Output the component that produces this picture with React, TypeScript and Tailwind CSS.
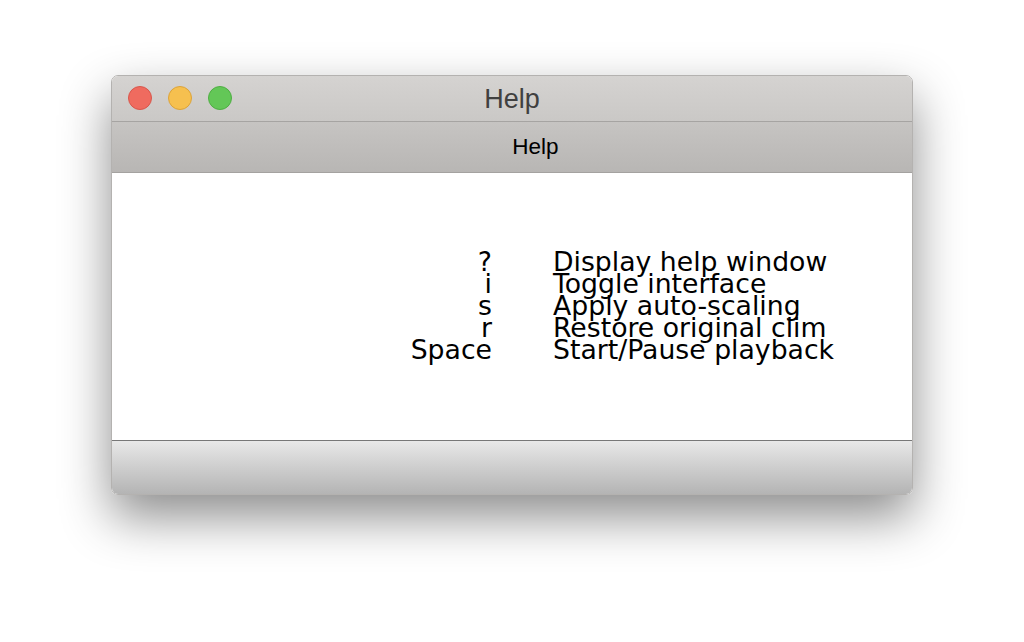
const shortcuts: [string, string][] = [
  ['?', 'Display help window'],
  ['i', 'Toggle interface'],
  ['s', 'Apply auto-scaling'],
  ['r', 'Restore original clim'],
  ['Space', 'Start/Pause playback'],
];

export default function App() {
  return (
    <div className="min-h-[642px] w-full bg-white pt-[75px]">
      {/* Window */}
      <div className="mx-auto flex h-[420px] w-[802px] flex-col overflow-hidden rounded-[7px] border border-[#b4b2b0] shadow-[0_22px_50px_rgba(0,0,0,0.45)]">
        {/* Title bar */}
        <div className="relative flex h-[46px] shrink-0 items-center justify-center border-b border-[#a6a4a2] bg-gradient-to-b from-[#d5d3d1] to-[#cac8c6]">
          <div className="absolute left-[16px] top-[10px] flex gap-[16px]">
            <span className="h-[24px] w-[24px] rounded-full border border-[#d8574c] bg-[#ef6b5f]" />
            <span className="h-[24px] w-[24px] rounded-full border border-[#dca33a] bg-[#f6c04f]" />
            <span className="h-[24px] w-[24px] rounded-full border border-[#4fae43] bg-[#63c757]" />
          </div>
          <span className="pt-[2px] font-['Liberation_Sans',Arial,sans-serif] text-[27px] leading-none text-[#404040]">Help</span>
        </div>
        {/* Toolbar */}
        <div className="flex h-[51px] shrink-0 items-center justify-center border-b border-[#a4a2a0] bg-gradient-to-b from-[#c6c4c2] to-[#b8b6b4] pl-[47px]">
          <span className="font-['Liberation_Sans',Arial,sans-serif] text-[22.5px] leading-none text-black">Help</span>
        </div>
        {/* Content */}
        <div className="flex-1 bg-white pt-[78px] font-['DejaVu_Sans',sans-serif] text-[26.7px] leading-[22px] text-black">
          <div className="grid grid-cols-[380px_auto] gap-x-[61px]">
            {shortcuts.map(([key, desc]) => (
              <div key={key} className="contents">
                <span className="text-right">{key}</span>
                <span>{desc}</span>
              </div>
            ))}
          </div>
        </div>
        {/* Bottom bar */}
        <div className="h-[54px] shrink-0 border-t border-[#777777] bg-gradient-to-b from-[#e8e8e8] to-[#b4b4b4]" />
      </div>
    </div>
  );
}
